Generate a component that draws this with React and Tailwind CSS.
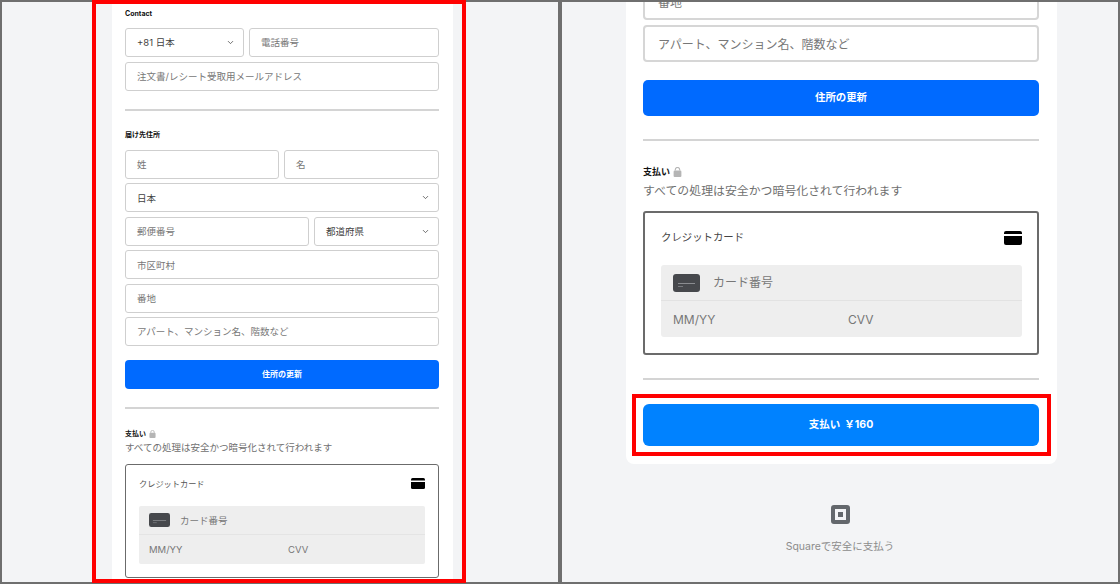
import { ChevronDown } from "lucide-react";

const FONT = { fontFamily: '"Inter", "Noto Sans CJK JP", sans-serif' };

// small field used in the left (zoomed out) panel
const SmallField = ({ label, select, className = "", dark }) => (
  <div
    className={`h-[29px] flex items-center justify-between rounded-[3px] border border-[#cfcfcf] bg-white pl-[11px] pr-[8px] text-[9.5px] ${
      dark ? "text-[#3f3f3f]" : "text-[#777777]"
    } ${className}`}
  >
    <span className="pt-[2px]">{label}</span>
    {select && <ChevronDown className="w-[9px] h-[9px] text-[#444444]" strokeWidth={2} />}
  </div>
);

// black card glyph, top right of the credit card box
const CardGlyph = ({ className }) => (
  <svg className={className} viewBox="0 0 18 14">
    <path d="M2 0h14a2 2 0 0 1 2 2v1H0V2a2 2 0 0 1 2-2z" fill="#000" />
    <path d="M0 5h18v7a2 2 0 0 1-2 2H2a2 2 0 0 1-2-2z" fill="#000" />
  </svg>
);

// dark placeholder card in the number row
const CardThumb = ({ className }) => (
  <svg className={className} viewBox="0 0 27 18">
    <rect width="27" height="18" rx="3" fill="#46484c" />
    <rect x="5" y="9" width="17" height="1" fill="#8a8c90" />
    <rect x="5" y="12" width="5" height="1" fill="#77797d" />
  </svg>
);

const Lock = ({ className }) => (
  <svg className={className} viewBox="0 0 8 9">
    <path d="M2 3.2V2.4a2 2 0 0 1 4 0v.8" fill="none" stroke="#b5b5b5" strokeWidth="1" />
    <rect x="0.5" y="3.2" width="7" height="5.8" rx="1" fill="#b5b5b5" />
  </svg>
);

const LeftPanel = () => (
  <div className="flex-1 bg-[#f3f4f6] overflow-hidden">
    <div className="ml-[110px] mr-[105px] h-full bg-white pl-[13px] pr-[14px] pt-[8px]">
      <p className="text-[7px] leading-[7px] font-bold text-[#111111]">Contact</p>
      <div className="mt-[11px] flex gap-[5px]">
        <SmallField label="+81 日本" select dark className="w-[119px]" />
        <SmallField label="電話番号" className="flex-1" />
      </div>
      <SmallField label="注文書/レシート受取用メールアドレス" className="mt-[5px]" />
      <div className="mt-[18px] h-[2px] bg-[#d4d4d4]" />

      <p className="mt-[20px] text-[7px] leading-[7px] font-bold text-[#111111]">届け先住所</p>
      <div className="mt-[12px] flex gap-[5px]">
        <SmallField label="姓" className="flex-1" />
        <SmallField label="名" className="w-[155px]" />
      </div>
      <SmallField label="日本" select dark className="mt-[4.4px]" />
      <div className="mt-[4.4px] flex gap-[5px]">
        <SmallField label="郵便番号" className="flex-1" />
        <SmallField label="都道府県" select dark className="w-[125px]" />
      </div>
      <SmallField label="市区町村" className="mt-[4.4px]" />
      <SmallField label="番地" className="mt-[4.4px]" />
      <SmallField label="アパート、マンション名、階数など" className="mt-[4.4px]" />
      <div className="mt-[14px] h-[29px] rounded-[4px] bg-[#006aff] flex items-center justify-center text-[8px] font-bold text-white">
        住所の更新
      </div>
      <div className="mt-[18px] h-[2px] bg-[#d4d4d4]" />

      <div className="mt-[21px] flex items-center gap-[3px]">
        <span className="text-[7px] leading-[8px] font-bold text-[#111111]">支払い</span>
        <Lock className="w-[7px] h-[8px]" />
      </div>
      <p className="mt-[3px] text-[9.5px] leading-[14px] text-[#6f6f6f]">すべての処理は安全かつ暗号化されて行われます</p>
      <div className="mt-[9px] h-[114px] rounded-[3px] border-[1.5px] border-[#6b6b6b] px-[13px] pt-[12px]">
        <div className="flex items-center justify-between h-[14px]">
          <span className="text-[8.2px] text-[#555555]">クレジットカード</span>
          <CardGlyph className="w-[14px] h-[11px]" />
        </div>
        <div className="mt-[15px] rounded-[2px] bg-[#eeeeee] text-[9.5px] text-[#777777]">
          <div className="h-[29px] flex items-center gap-[10px] px-[10px] border-b border-[#e4e4e4]">
            <CardThumb className="w-[21px] h-[14px]" />
            <span className="pt-[2px]">カード番号</span>
          </div>
          <div className="h-[29px] flex items-center pl-[10px] pt-[2px]">
            <span className="w-[139px]">MM/YY</span>
            <span>CVV</span>
          </div>
        </div>
      </div>
    </div>
  </div>
);

const BigField = ({ label, className = "" }) => (
  <div className={`h-[37px] flex items-center rounded-[4px] border-2 border-[#d6d6d6] bg-white pl-[13px] pt-[2px] text-[12px] text-[#777777] ${className}`}>
    {label}
  </div>
);

const RightPanel = () => (
  <div className="flex-1 bg-[#f3f4f6] overflow-hidden">
    <div className="ml-[64px] mr-[61px] -mt-[19px] bg-white rounded-b-[8px] pl-[17px] pr-[18px] pb-[18px]">
      <BigField label="番地" />
      <BigField label="アパート、マンション名、階数など" className="mt-[5px]" />
      <div className="mt-[18px] h-[36px] rounded-[5px] bg-[#006aff] flex items-center justify-center text-[10.4px] font-bold text-white">
        住所の更新
      </div>
      <div className="mt-[23px] h-[2px] bg-[#d4d4d4]" />

      <div className="mt-[26px] flex items-center gap-[3px]">
        <span className="text-[9px] leading-[10px] font-bold text-[#111111]">支払い</span>
        <Lock className="w-[9px] h-[10px]" />
      </div>
      <p className="mt-[5px] text-[11.9px] leading-[18px] text-[#6f6f6f]">すべての処理は安全かつ暗号化されて行われます</p>
      <div className="mt-[11px] h-[144px] rounded-[3px] border-2 border-[#6b6b6b] pl-[16px] pr-[15px] pt-[16px]">
        <div className="flex items-center justify-between h-[18px]">
          <span className="text-[10.4px] text-[#444444]">クレジットカード</span>
          <CardGlyph className="w-[18px] h-[14px]" />
        </div>
        <div className="mt-[18px] rounded-[3px] bg-[#eeeeee] text-[12px] text-[#777777]">
          <div className="h-[36px] flex items-center gap-[13px] px-[12px] border-b border-[#e2e2e2]">
            <CardThumb className="w-[27px] h-[18px]" />
            <span>カード番号</span>
          </div>
          <div className="h-[36px] flex items-center pl-[12px] pt-[2px]">
            <span className="w-[175px]">MM/YY</span>
            <span>CVV</span>
          </div>
        </div>
      </div>
      <div className="mt-[23px] h-[2px] bg-[#d4d4d4]" />
      <div className="mt-[24px] h-[42px] rounded-[6px] bg-[#0082ff] flex items-center justify-center gap-[4px] text-[10.5px] font-bold text-white">
        <span>支払い</span>
        <span>￥160</span>
      </div>
    </div>
    <div className="mt-[41px] flex flex-col items-center gap-[16px]">
      <svg className="w-[19px] h-[19px]" viewBox="0 0 19 19">
        <path
          fillRule="evenodd"
          d="M3 0h13a3 3 0 0 1 3 3v13a3 3 0 0 1-3 3H3a3 3 0 0 1-3-3V3a3 3 0 0 1 3-3zm1 4v11h11V4z"
          fill="#63676c"
        />
        <rect x="7" y="7" width="5" height="5" fill="#63676c" />
      </svg>
      <span className="text-[10.5px] leading-[14px] text-[#8c8c8c]">Squareで安全に支払う</span>
    </div>
  </div>
);

export default function App() {
  return (
    <div className="relative w-[1120px] h-[584px] overflow-hidden bg-[#6f6f6f] p-[2px] flex gap-[4px]" style={FONT}>
      <LeftPanel />
      <RightPanel />
      {/* red highlight frames drawn over the screenshots */}
      <div className="absolute left-[92px] top-0 w-[374px] h-[583px] border-[4px] border-[#ff0000]" />
      <div className="absolute left-[632px] top-[394px] w-[419px] h-[62px] border-[4px] border-[#ff0000]" />
    </div>
  );
}
